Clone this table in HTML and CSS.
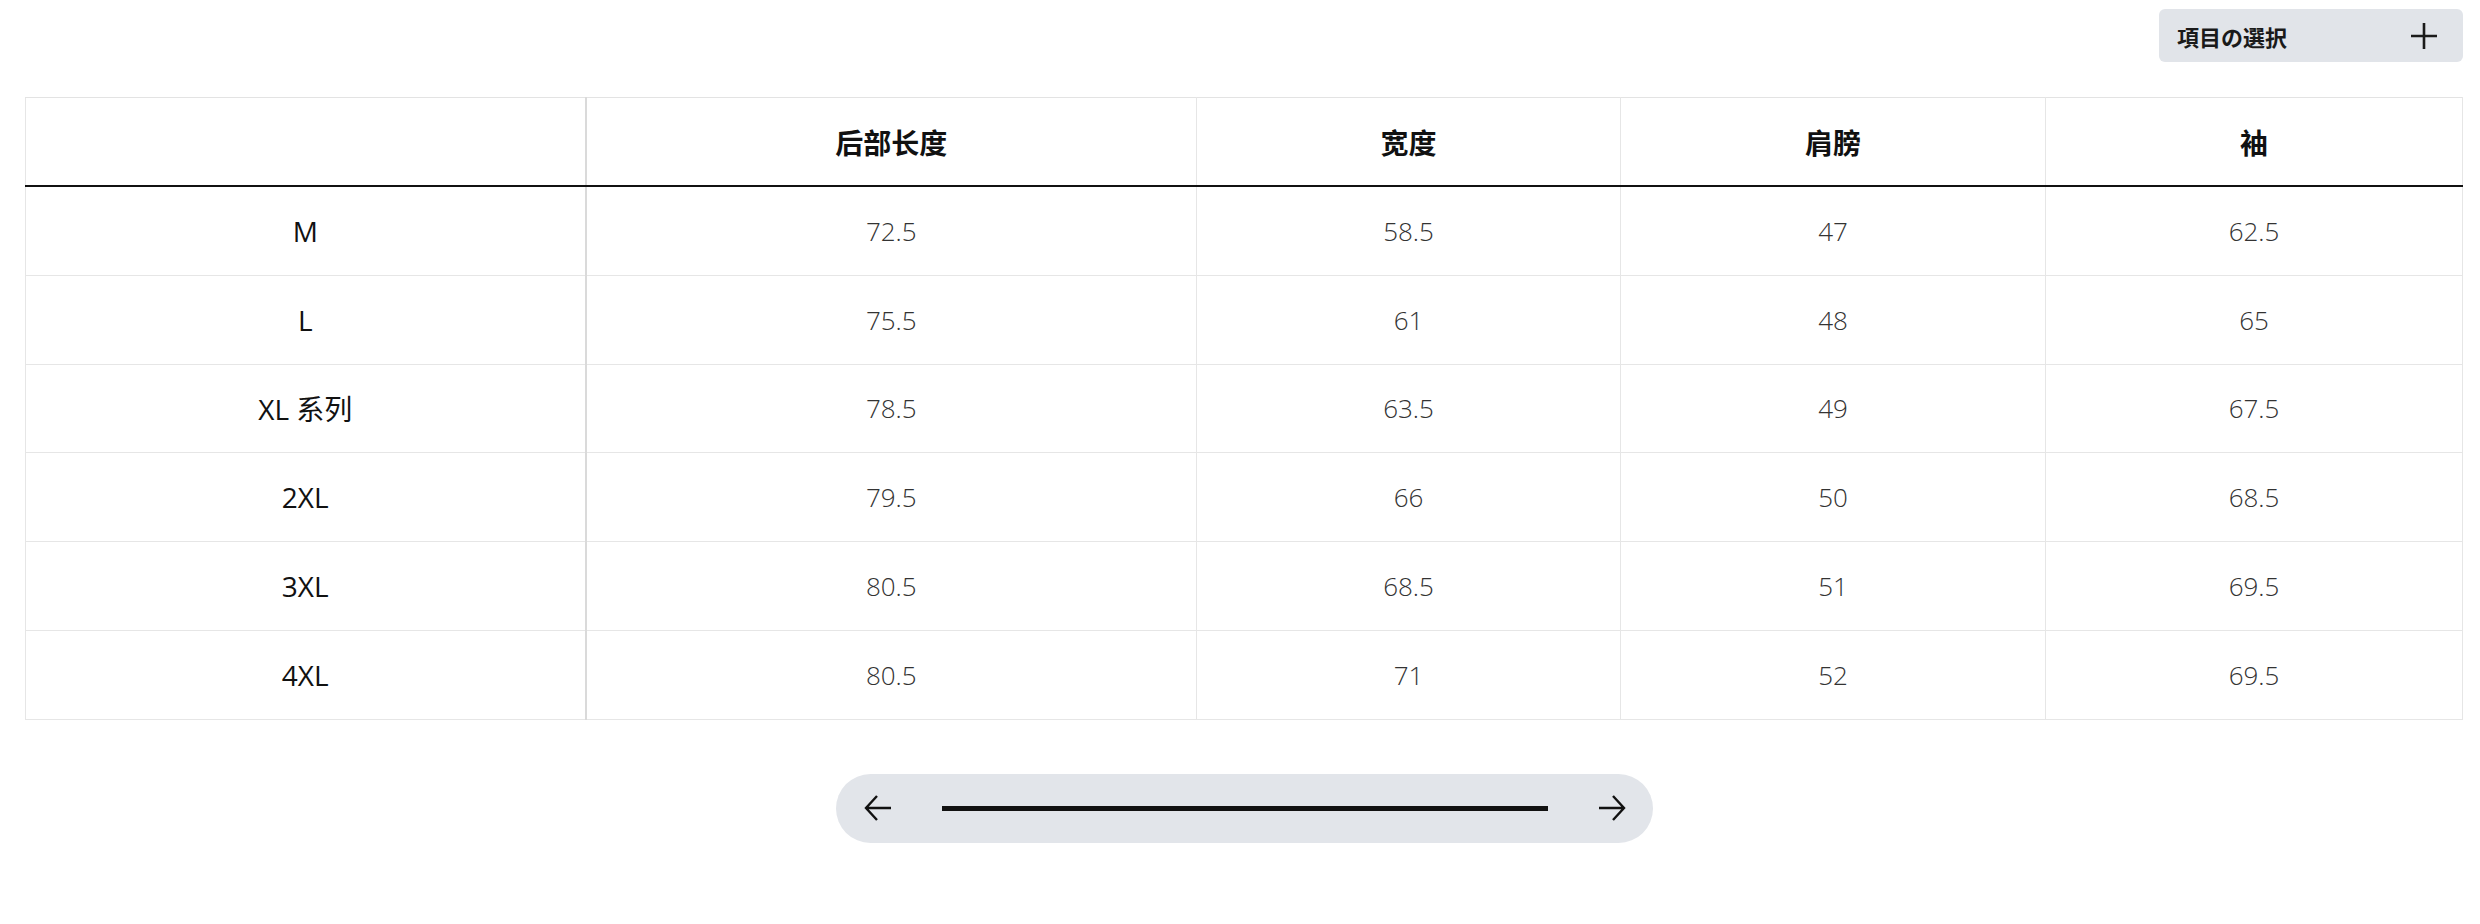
FILE: index.html
```html
<!DOCTYPE html>
<html lang="zh">
<head>
<meta charset="utf-8">
<title>尺码表</title>
<link rel="stylesheet" href="styles.css">
</head>
<body>
<div class="page">
  <div class="toolbar">
    <button class="select-btn" type="button">
      <span class="select-label" lang="ja">項目の選択</span>
      <svg class="plus" width="28" height="28" viewBox="0 0 28 28" aria-hidden="true"><path d="M14 1V27M1 14H27" stroke="#1a1a1a" stroke-width="2.6" fill="none"/></svg>
    </button>
  </div>
  <table class="size-table">
    <colgroup>
      <col class="c0"><col class="c1"><col class="c2"><col class="c3"><col class="c4">
    </colgroup>
    <thead>
      <tr><th class="first"></th><th>后部长度</th><th>宽度</th><th>肩膀</th><th>袖</th></tr>
    </thead>
    <tbody>
      <tr><td class="first">M</td><td>72.5</td><td>58.5</td><td>47</td><td>62.5</td></tr>
      <tr><td class="first">L</td><td>75.5</td><td>61</td><td>48</td><td>65</td></tr>
      <tr><td class="first">XL 系列</td><td>78.5</td><td>63.5</td><td>49</td><td>67.5</td></tr>
      <tr><td class="first">2XL</td><td>79.5</td><td>66</td><td>50</td><td>68.5</td></tr>
      <tr><td class="first">3XL</td><td>80.5</td><td>68.5</td><td>51</td><td>69.5</td></tr>
      <tr><td class="first">4XL</td><td>80.5</td><td>71</td><td>52</td><td>69.5</td></tr>
    </tbody>
  </table>
  <div class="scroller-wrap">
    <div class="scroller">
      <svg class="arrow" width="28" height="28" viewBox="0 0 28 28" aria-hidden="true"><path d="M27 14H2M13 2L2 14L13 26" stroke="#111" stroke-width="2.4" fill="none"/></svg>
      <div class="track"></div>
      <svg class="arrow" width="28" height="28" viewBox="0 0 28 28" aria-hidden="true"><path d="M1 14H26M15 2L26 14L15 26" stroke="#111" stroke-width="2.4" fill="none"/></svg>
    </div>
  </div>
</div>
</body>
</html>
```
FILE: styles.css
```css
html, body {
  margin: 0;
  padding: 0;
  background: #ffffff;
}
body {
  font-family: "Open Sans", "Noto Sans CJK SC", sans-serif;
  color: #1c1c1c;
}
.page {
  padding: 9px 17px 0 25px;
}
.toolbar {
  display: flex;
  justify-content: flex-end;
}
.select-btn {
  display: flex;
  align-items: center;
  justify-content: space-between;
  width: 304px;
  height: 53px;
  padding: 0 25px 0 18px;
  border: none;
  border-radius: 6px;
  background: #e1e4e9;
  box-sizing: border-box;
  font: inherit;
}
.select-label {
  font-family: "Noto Sans CJK JP", sans-serif;
  font-weight: 700;
  font-size: 22px;
  color: #1a1a1a;
}
.plus {
  display: block;
}
.size-table {
  margin-top: 35px;
  width: 100%;
  border-collapse: collapse;
  table-layout: fixed;
  border: 1px solid #e3e3e3;
}
.c0 { width: 560px; }
.c1 { width: 611px; }
.c2 { width: 424px; }
.c3 { width: 425px; }
.c4 { width: 417px; }
.size-table th,
.size-table td {
  text-align: center;
  vertical-align: middle;
  border: 1px solid #e6e6e6;
  padding: 0;
}
.size-table th {
  height: 87px;
  font-family: "Noto Sans CJK SC", sans-serif;
  font-weight: 700;
  font-size: 28px;
  color: #111;
  border-bottom: 2px solid #111;
  border-top-color: #e3e3e3;
}
.size-table td {
  height: 87.8px;
  font-family: "Open Sans", "Noto Sans CJK SC", sans-serif;
  font-weight: 300;
  font-size: 26px;
  color: #333;
}
.size-table td.first {
  font-weight: 400;
  font-size: 28px;
  color: #111;
}
.size-table .first {
  border-right: 2px solid #dadada;
}
.scroller-wrap {
  display: flex;
  justify-content: center;
  margin-top: 54px;
}
.scroller {
  display: flex;
  align-items: center;
  width: 817px;
  height: 69px;
  padding: 0 27px 0 28px;
  box-sizing: border-box;
  border-radius: 35px;
  background: #e2e5ea;
  gap: 50px;
}
.arrow {
  display: block;
  flex: none;
}
.track {
  flex: 1;
  height: 5px;
  background: #111;
}
```
